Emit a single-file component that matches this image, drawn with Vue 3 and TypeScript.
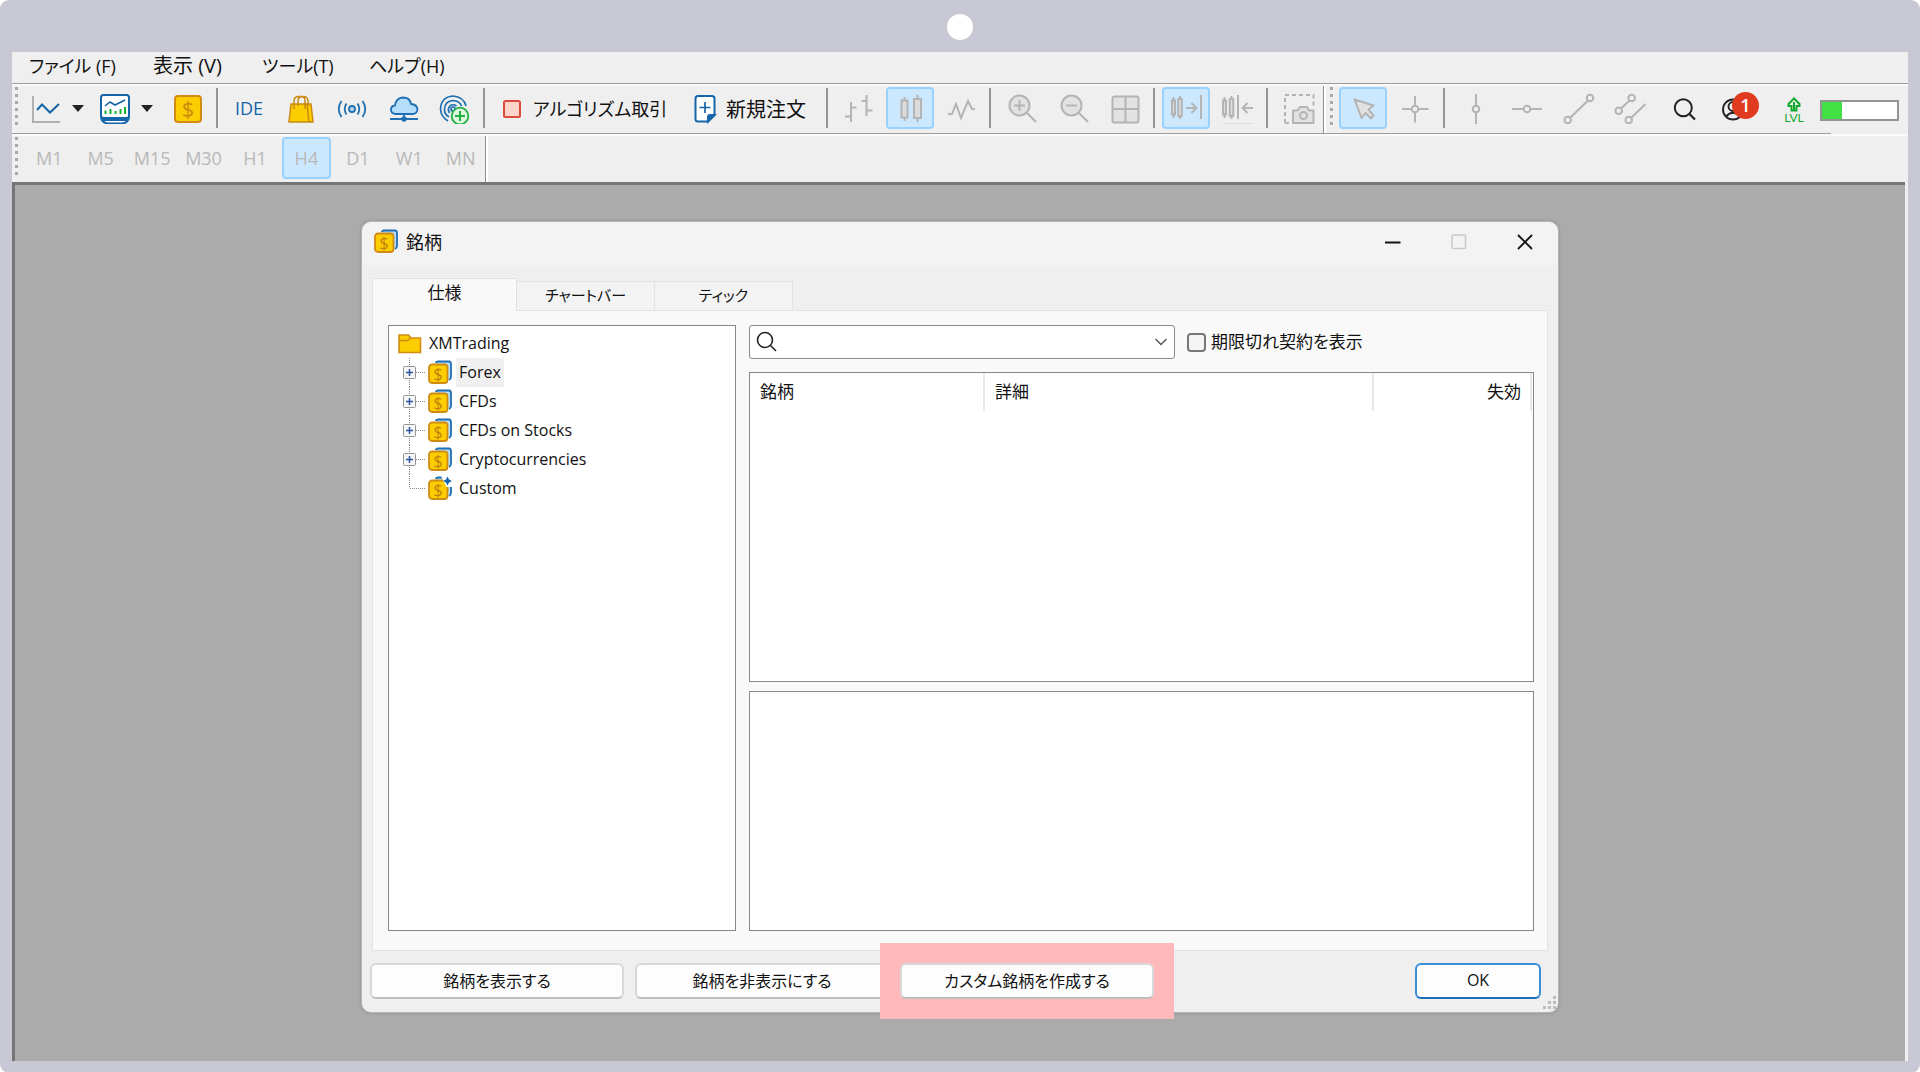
<script setup lang="ts">
import { ref } from 'vue'

interface Tool {
  id: string
  label: string
  active?: boolean
}

const menus = ['ファイル (F)', '表示 (V)', 'ツール(T)', 'ヘルプ(H)']

const icons: Record<string, string> = {
  line: '<g stroke-width="2"><path d="M3 4V30H30" stroke="#b0b0b0"/><path d="M7 18L12 12.5L20 20.5L29 12" stroke="#1565a8"/></g>',
  profile:
    '<g stroke="#1565a8" stroke-width="2"><path d="M2 25Q3 31 9 31.500H23Q29 31 30 25" fill="#fff"/><path d="M4 28H28"/><rect x="2" y="3" width="28" height="23" rx="2.500" fill="#fff"/><path d="M6 14L11 10L16 13L26 8" stroke-width="1.600"/></g><path d="M6.500 18.500V22M11.500 17V22M16.500 19V22M21.500 17V22M26 15V22" stroke="#12b32c" stroke-width="2"/>',
  gold: '<rect x="3" y="4" width="26" height="26" rx="3" fill="#fccd00" stroke="#d08c12" stroke-width="2"/><text x="16" y="24.500" text-anchor="middle" font-size="21" fill="#c98a12" stroke="none">$</text>',
  bag: '<path d="M6 12H26L28 30H4Z" fill="#fccd00" stroke="#c98a12" stroke-width="1.500"/><path d="M9 17V9Q9 5 13 4.500H17Q20 5 20 9V17M13 14V9Q13 5 17 4.500Q23 4 23 9V14M22 12L24 30" stroke="#c98a12" stroke-width="1.500"/>',
  signal:
    '<g stroke="#1f6fb2" stroke-width="1.800"><circle cx="16" cy="17" r="3" fill="#b9dcf6"/><path d="M10.500 11.500Q7 17 10.500 22.500M21.500 11.500Q25 17 21.500 22.500M5.500 9Q0 17 5.500 25M26.500 9Q32 17 26.500 25"/></g>',
  cloud:
    '<g stroke="#1f6fb2" stroke-width="1.800"><path d="M7.500 22Q3 21.500 3 17.500Q3 14 7 13.500Q8 6 15 5.500Q22 5.500 23 12Q29 12.500 29.500 17.500Q29 21.500 25 22Z" fill="#b5defb"/><path d="M16 22V27M2 27H30"/><circle cx="16" cy="27" r="1.800" fill="#1f6fb2"/></g>',
  radar:
    '<g stroke="#1f6fb2" stroke-width="1.700"><circle cx="14" cy="17" r="2"/><path d="M9 29Q2 25 1.500 17Q2 5 14 4Q25 5 27 14M10 25Q5 22 5.500 17Q6 9 14 8.500Q21 9 22.500 14M10.500 21Q8 17 11 14Q14 11.500 17.500 14"/></g><circle cx="21" cy="24" r="8.300" fill="#dff7df" stroke="#1fb141" stroke-width="1.800"/><path d="M21 19V29M16 24H26" stroke="#1fb141" stroke-width="2"/>',
  stop: '<rect x="8" y="9" width="16" height="16" rx="1.500" fill="#fdd3ca" stroke="#dc4a3c" stroke-width="2"/>',
  order:
    '<path d="M9 4H23Q25.500 4 25.500 6.500V23L19 29.500H9Q6.500 29.500 6.500 27V6.500Q6.500 4 9 4Z" fill="#fff" stroke="#1565a8" stroke-width="2"/><path d="M25.500 23H21Q19 23 19 25V29.500Z" fill="#1565a8" stroke="#1565a8"/><path d="M16 10V21M10.500 15.500H21.500" stroke="#1565a8" stroke-width="1.700"/>',
  bars: '<path d="M8 10V30M8 15.500H13.500M2 24.500H8M23.500 3V24M18.500 9H23.500M23.500 18.500H29.500"/>',
  candles:
    '<path d="M10.500 5V29M23.500 3V30"/><rect x="7.500" y="8.500" width="6" height="17" fill="#dcdcdc"/><rect x="20" y="7" width="7" height="19" fill="#dcdcdc"/>',
  lines: '<path d="M3 22H7L11 12L16 26L23 9L27 17H30"/>',
  zoomin: '<circle cx="13.500" cy="13.500" r="10" fill="#e2e2e2"/><path d="M21 21L30 30M13.500 8V19M8 13.500H19"/>',
  zoomout: '<circle cx="13.500" cy="13.500" r="10" fill="#e2e2e2"/><path d="M21 21L30 30M8 13.500H19"/>',
  tile: '<rect x="3.500" y="4.500" width="26" height="26" rx="2" fill="#e2e2e2"/><path d="M16.500 4.500V30M3.500 17H29.500"/>',
  scroll:
    '<path d="M3.500 5V26M10 4V27"/><rect x="2" y="8.500" width="3" height="14" fill="#ddd"/><rect x="8.200" y="7" width="3.600" height="17" fill="#ddd"/><path d="M16 16H26M21.500 11L26.500 16L21.500 21M31 3V27"/><path d="M1 31.500H31" stroke="#e4e8ec" stroke-width="1"/>',
  shift:
    '<path d="M2.500 5V26M9.500 4V27"/><rect x="1" y="8.500" width="3" height="14" fill="#ddd"/><rect x="7.700" y="7" width="3.600" height="17" fill="#ddd"/><path d="M16 3V27M31 16H21M25.500 11L20.500 16L25.500 21"/><path d="M1 31.500H31" stroke="#ddd" stroke-width="1"/>',
  camera:
    '<path d="M2 31V3H30.500V14M2 31H7" stroke-dasharray="4 3"/><path d="M10 18.500H14.500L17 15H24L26 18.500H30.500V31H10Z" fill="#e2e2e2" stroke-linejoin="round"/><circle cx="20.500" cy="23.500" r="3.500"/>',
  cursor:
    '<path d="M7.500 7.500L26.500 13.500L21.500 17.500L26.500 23.500L24 26.500L18.500 21L14.500 26Z" fill="#e2e2e2" stroke-linejoin="round"/>',
  cross: '<path d="M16 4V13.500M16 20.500V30.500M3 17H12.500M19.500 17H29.500"/><circle cx="16" cy="17" r="3.300"/>',
  vline: '<path d="M16 2V13.500M16 20.500V32"/><circle cx="16" cy="17" r="3.300"/>',
  hline: '<path d="M1 17H12.500M19.500 17H31"/><circle cx="16" cy="17" r="3.300"/>',
  trend: '<path d="M7 26L25 8.500"/><circle cx="4.700" cy="28" r="3.300"/><circle cx="27" cy="6" r="3.300"/>',
  channel:
    '<path d="M7 16.500L15.500 8.500M17 26L31.500 12"/><circle cx="4.700" cy="18.700" r="3.300"/><circle cx="17.700" cy="6" r="3.300"/><circle cx="14.700" cy="28" r="3.300"/>',
  search: '<circle cx="14.300" cy="15.800" r="8.500" stroke="#222"/><path d="M20.500 22L26 27.500" stroke="#222" stroke-width="2.200"/>',
  user: '<g stroke="#222" stroke-width="1.900"><circle cx="12" cy="17.500" r="10"/><circle cx="12" cy="14.500" r="4.500"/><path d="M5 24.500Q12 17 19 24.500"/></g>',
  coins:
    '<path d="M9 3Q9 1.500 11 1.500H22Q24 1.500 24 4.500V17Q24 19 22 20" fill="#b5defb" stroke="#1f6fb2" stroke-width="1.800"/><rect x="2" y="4.500" width="18.500" height="18.500" rx="3" fill="#fccd00" stroke="#d08c12" stroke-width="1.800"/><text x="11.200" y="19.500" text-anchor="middle" font-size="16" fill="#c07f10" stroke="none">$</text>',
  folder:
    '<path d="M2 4H11.500L14 7H23.500V21.500H2Z" fill="#fccd00" stroke="#d08c12" stroke-width="1.600"/><path d="M2 9.500H10.500L13.500 7" stroke="#d08c12" stroke-width="1.600"/>',
}

const services: Tool[] = [
  { id: 'bag', label: 'Market' },
  { id: 'signal', label: 'Signals' },
  { id: 'cloud', label: 'VPS' },
  { id: 'radar', label: 'Hosting' },
]

const groups: { name: string; tools: Tool[] }[] = [
  {
    name: 'w150',
    tools: [
      { id: 'bars', label: 'Bars' },
      { id: 'candles', label: 'Candles', active: true },
      { id: 'lines', label: 'Line' },
    ],
  },
  {
    name: 'w151',
    tools: [
      { id: 'zoomin', label: 'Zoom in' },
      { id: 'zoomout', label: 'Zoom out' },
      { id: 'tile', label: 'Tile windows' },
    ],
  },
  {
    name: 'w100',
    tools: [
      { id: 'scroll', label: 'Auto scroll', active: true },
      { id: 'shift', label: 'Chart shift' },
    ],
  },
]

const pointers: Tool[] = [
  { id: 'cursor', label: 'Cursor', active: true },
  { id: 'cross', label: 'Crosshair' },
]

const drawing: Tool[] = [
  { id: 'vline', label: 'Vertical line' },
  { id: 'hline', label: 'Horizontal line' },
  { id: 'trend', label: 'Trend line' },
  { id: 'channel', label: 'Channel' },
]

const frames = ['M1', 'M5', 'M15', 'M30', 'H1', 'H4', 'D1', 'W1', 'MN']
const frame = ref('H4')

const tabs = ['仕様', 'チャートバー', 'ティック']
const tab = ref('仕様')

const nodes = ['Forex', 'CFDs', 'CFDs on Stocks', 'Cryptocurrencies', 'Custom']
const selected = ref('Forex')
const query = ref('')
const expired = ref(false)
</script>

<template>
  <div class="frame">
    <div class="lens"></div>
    <main class="app">
      <nav class="menubar">
        <button v-for="m in menus" :key="m">{{ m }}</button>
      </nav>

      <div class="toolbar">
        <i class="grip"></i>
        <div class="group w190">
          <div class="charts">
            <button v-for="id in ['line', 'profile']" :key="id" class="split" :aria-label="id">
              <svg class="ico" viewBox="0 0 32 32" v-html="icons[id]"></svg>
              <svg class="caret" viewBox="0 0 12 7"><path d="M0 0H12L6 7Z" fill="#222" /></svg>
            </button>
          </div>
          <button class="tool" aria-label="Symbols"><svg class="ico" viewBox="0 0 32 32" v-html="icons.gold"></svg></button>
        </div>
        <i class="sep"></i>
        <div class="group w254">
          <button class="tool ide">IDE</button>
          <button v-for="t in services" :key="t.id" class="tool" :aria-label="t.label">
            <svg class="ico" viewBox="0 0 32 32" v-html="icons[t.id]"></svg>
          </button>
        </div>
        <i class="sep"></i>
        <div class="group w330">
          <button class="tool wide"><svg class="ico" viewBox="0 0 32 32" v-html="icons.stop"></svg>アルゴリズム取引</button>
          <button class="tool wide"><svg class="ico" viewBox="0 0 32 32" v-html="icons.order"></svg>新規注文</button>
        </div>
        <i class="sep"></i>
        <template v-for="g in groups" :key="g.name">
          <div class="group" :class="g.name">
            <button v-for="t in g.tools" :key="t.id" class="tool" :class="{ active: t.active }" :aria-label="t.label">
              <svg class="ico" viewBox="0 0 32 32" v-html="icons[t.id]"></svg>
            </button>
          </div>
          <i class="sep"></i>
        </template>
        <button class="tool" aria-label="Screenshot"><svg class="ico" viewBox="0 0 32 32" v-html="icons.camera"></svg></button>
        <i class="edge"></i>
        <i class="grip"></i>
        <div class="group w100">
          <button v-for="t in pointers" :key="t.id" class="tool" :class="{ active: t.active }" :aria-label="t.label">
            <svg class="ico" viewBox="0 0 32 32" v-html="icons[t.id]"></svg>
          </button>
        </div>
        <i class="sep"></i>
        <div class="group w202">
          <button v-for="t in drawing" :key="t.id" class="tool" :aria-label="t.label">
            <svg class="ico" viewBox="0 0 32 32" v-html="icons[t.id]"></svg>
          </button>
        </div>
        <div class="group status">
          <button class="tool" aria-label="Search"><svg class="ico" viewBox="0 0 32 32" v-html="icons.search"></svg></button>
          <button class="tool user" aria-label="Account">
            <svg class="ico" viewBox="0 0 32 32" v-html="icons.user"></svg>
            <span class="badge">1</span>
          </button>
          <div class="level">
            <svg viewBox="0 0 14 15"><path d="M7 1.500L12.500 7V9H9.500V13.500H4.500V9H1.500V7ZM7 5V13" /></svg>
            <span>LVL</span>
          </div>
          <progress class="meter" max="100" value="26" aria-label="LVL"></progress>
        </div>
      </div>

      <div class="timebar">
        <i class="grip"></i>
        <div class="frames">
          <button v-for="f in frames" :key="f" :class="{ active: f === frame }" @click="frame = f">{{ f }}</button>
        </div>
        <i class="edge"></i>
      </div>

      <div class="workspace">
        <section class="dialog" role="dialog" aria-label="銘柄">
          <header class="title">
            <svg class="coin" viewBox="0 0 26 26" v-html="icons.coins"></svg>
            <h1>銘柄</h1>
            <button aria-label="Minimize"><svg viewBox="0 0 16 16"><path d="M0 8.500H15.500" stroke="#111" stroke-width="2" /></svg></button>
            <button aria-label="Maximize" disabled>
              <svg viewBox="0 0 16 16"><rect x="1" y="1" width="13.500" height="13.500" rx="1" stroke="#c9c9c9" stroke-width="1.500" /></svg>
            </button>
            <button aria-label="Close"><svg viewBox="0 0 16 16"><path d="M1 1L15 15M15 1L1 15" stroke="#111" stroke-width="1.800" /></svg></button>
          </header>

          <div class="tabs" role="tablist">
            <button v-for="t in tabs" :key="t" role="tab" :aria-selected="t === tab" :class="{ on: t === tab }" @click="tab = t">
              {{ t }}
            </button>
          </div>

          <div class="panel">
            <ul class="tree">
              <li class="root"><svg class="coin" viewBox="0 0 26 26" v-html="icons.folder"></svg><span>XMTrading</span></li>
              <li v-for="(n, i) in nodes" :key="n" :class="{ picked: n === selected }" @click="selected = n">
                <svg class="branch" viewBox="0 0 24 29">
                  <path :d="i < 4 ? 'M7.500 0V29' : 'M7.500 0V14'" stroke="#888" stroke-dasharray="1 1" />
                  <path d="M8 14.500H24" stroke="#888" stroke-dasharray="1 1" />
                  <template v-if="i < 4">
                    <rect x="1.500" y="8.500" width="12" height="12" rx="1" fill="#f6f6f6" stroke="#949494" />
                    <path d="M4 14.500H11M7.500 11V18" stroke="#2f55a5" stroke-width="1.500" />
                  </template>
                </svg>
                <svg class="coin" viewBox="0 0 26 26">
                  <g v-html="icons.coins"></g>
                  <path v-if="i === 4" d="M14 0H26V11H19.500Z" fill="#fff" />
                  <path v-if="i === 4" d="M20.500 0.500L22 3.500L25 5L22 6.500L20.500 9.500L19 6.500L16 5L19 3.500Z" fill="#1565a8" />
                </svg>
                <span>{{ n }}</span>
              </li>
            </ul>

            <div class="detail">
              <div class="filter">
                <div class="combo">
                  <svg class="lens-icon" viewBox="0 0 22 22"><circle cx="9" cy="9" r="7.500" /><path d="M14.500 14.500L20 20" /></svg>
                  <input v-model="query" type="text" aria-label="Search" />
                  <button aria-label="Open list"><svg viewBox="0 0 12 8"><path d="M0.500 1L6 6.500L11.500 1" /></svg></button>
                </div>
                <label class="check"><input v-model="expired" type="checkbox" />期限切れ契約を表示</label>
              </div>
              <div class="list">
                <table>
                  <thead>
                    <tr>
                      <th class="c1">銘柄</th>
                      <th>詳細</th>
                      <th class="c3">失効</th>
                    </tr>
                  </thead>
                </table>
              </div>
              <div class="info"></div>
            </div>
          </div>

          <footer class="actions">
            <button>銘柄を表示する</button>
            <button>銘柄を非表示にする</button>
            <div class="focus"><button>カスタム銘柄を作成する</button></div>
            <button class="ok">OK</button>
            <svg class="resize" viewBox="0 0 14 14">
              <path d="M10 0h3v3h-3zM10 5h3v3h-3zM5 5h3v3h-3zM10 10h3v3h-3zM5 10h3v3h-3zM0 10h3v3h-3z" fill="#bdbdbd" />
            </svg>
          </footer>
        </section>
      </div>
    </main>
  </div>
</template>

<style>
body {
  margin: 0;
  background: #fff;
}
</style>

<style scoped>
* {
  box-sizing: border-box;
}
.frame {
  min-height: 100vh;
  padding: 14px 12px 12px;
  display: flex;
  flex-direction: column;
  background: #c8c7d4;
  border-radius: 9px;
  font-family: 'Open Sans', 'Noto Sans CJK JP', sans-serif;
  font-feature-settings: 'palt';
  color: #111;
}
button {
  margin: 0;
  padding: 0;
  border: 0;
  background: none;
  font: inherit;
  color: inherit;
  white-space: nowrap;
}
svg {
  display: block;
  flex: none;
  fill: none;
}
.lens {
  width: 26px;
  height: 26px;
  margin: 0 auto 12px;
  border-radius: 50%;
  background: #fff;
}
.app {
  flex: 1;
  display: flex;
  flex-direction: column;
  background: #efefef;
}
.menubar {
  height: 32px;
  padding: 0 0 3px 17px;
  display: flex;
  border-bottom: 1px solid #9d9d9d;
  font-size: 18px;
  line-height: 28px;
}
.menubar button {
  text-align: left;
}
.menubar button:nth-child(1) {
  width: 124px;
}
.menubar button:nth-child(2) {
  width: 109px;
  font-size: 20px;
}
.menubar button:nth-child(3) {
  width: 107px;
}
.toolbar,
.timebar {
  position: relative;
  height: 50px;
  padding-bottom: 4px;
  border-top: 2px solid #fafafa;
  display: flex;
  align-items: center;
}
.toolbar::after {
  content: '';
  position: absolute;
  left: 0;
  right: 77px;
  bottom: 0;
  height: 1px;
  background: #9d9d9d;
}
.timebar {
  height: 48px;
  padding-bottom: 2px;
}
.grip {
  flex: none;
  width: 3px;
  height: 42px;
  margin: 0 4px 0 3px;
  background: repeating-linear-gradient(#a8a8a8 0 3px, transparent 3px 7px);
}
.group {
  flex: none;
  display: flex;
  justify-content: space-between;
  align-items: center;
}
.charts {
  display: flex;
  gap: 2px;
}
.w190 {
  width: 190px;
}
.w254 {
  width: 254px;
}
.w330 {
  width: 330px;
}
.w150 {
  width: 150px;
}
.w151 {
  width: 151px;
}
.w100 {
  width: 100px;
}
.w202 {
  width: 202px;
}
.sep {
  flex: none;
  width: 2px;
  height: 40px;
  margin: 0 7px 0 4px;
  background: #949494;
}
.edge {
  flex: none;
  align-self: stretch;
  width: 3px;
  margin-bottom: -2px;
  border-left: 1px solid #8f8f8f;
  background: #fff;
}
.toolbar .edge {
  margin: 0 1px -4px 0;
}
.toolbar .edge + .grip {
  margin-right: 6px;
}
.tool {
  flex: none;
  width: 48px;
  height: 42px;
  display: flex;
  align-items: center;
  justify-content: center;
  border: 2px solid transparent;
  border-radius: 4px;
}
.active {
  background: #cce8ff;
  border-color: #99d1ff;
}
.ico {
  width: 32px;
  height: 32px;
  stroke: #b4b4b4;
  stroke-width: 2;
}
.split {
  width: 67px;
  height: 42px;
  padding-left: 8px;
  display: flex;
  align-items: center;
  gap: 10px;
}
.caret {
  width: 12px;
  height: 7px;
}
.ide {
  font-size: 18px;
  color: #1565a8;
}
.wide {
  width: auto;
  padding: 0 4px 0 2px;
  gap: 5px;
  font-size: 18px;
}
.wide + .wide {
  font-size: 20px;
  padding-right: 14px;
}
.status {
  padding-left: 7px;
}
.user {
  position: relative;
  width: 52px;
  padding-left: 4px;
}
.badge {
  position: absolute;
  left: 21px;
  top: 3px;
  width: 27px;
  height: 27px;
  border-radius: 50%;
  background: #e03a20;
  color: #fff;
  font: 600 18px/27px 'Open Sans', sans-serif;
}
.level {
  width: 57px;
  margin-top: 4px;
  padding-left: 9px;
  display: flex;
  flex-direction: column;
  align-items: center;
  color: #12a82c;
  font: 12px/12px Lato, sans-serif;
}
.level svg {
  width: 14px;
  height: 15px;
  stroke: #12a82c;
  stroke-width: 2;
}
.meter {
  appearance: none;
  width: 79px;
  height: 21px;
  margin: 4px 0 0 2px;
  border: 2px solid #939393;
  background: #fff;
}
.meter::-webkit-progress-bar {
  background: #fff;
}
.meter::-webkit-progress-value {
  background: #43e043;
}
.frames {
  width: 460px;
  margin-left: 3px;
  display: flex;
  gap: 3px;
  color: #b8b8b8;
  font-size: 18px;
}
.frames button {
  flex: 1;
  height: 42px;
  border: 2px solid transparent;
  border-radius: 4px;
}
.frames .active {
  border-color: #99d1ff;
}
.workspace {
  flex: 1;
  margin-right: 3px;
  padding: 36px 0 48px;
  border-top: 3px solid #757575;
  border-left: 3px solid #757575;
  background: #ababab;
}
.dialog {
  width: 1198px;
  max-width: 100%;
  margin: 0 auto;
  border: 1px solid #b5b5b5;
  border-radius: 10px;
  background: #efefef;
  box-shadow: 0 0 3px #8a8a8a;
  font-size: 17px;
}
.title {
  height: 43px;
  padding: 0 17px 3px 11px;
  display: flex;
  align-items: center;
  background: #f3f3f3;
  border-radius: 10px 10px 0 0;
}
.title h1 {
  flex: 1;
  margin: 0 0 0 7px;
  font-size: 18px;
  line-height: 26px;
  font-weight: 400;
}
.title button {
  width: 32px;
  height: 32px;
  margin-left: 34px;
  display: flex;
  align-items: center;
  justify-content: center;
}
.title svg:not(.coin) {
  width: 16px;
  height: 16px;
}
.coin {
  width: 26px;
  height: 26px;
}
.tabs {
  height: 45px;
  padding: 0 10px;
  display: flex;
  align-items: flex-end;
}
.tabs button {
  width: 138px;
  height: 29px;
  padding-bottom: 4px;
  border: 1px solid #e2e2e2;
  border-left: 0;
  border-bottom: 0;
  background: #f3f3f3;
  font-size: 15px;
}
.tabs .on {
  position: relative;
  width: 145px;
  height: 33px;
  margin-bottom: -1px;
  padding-bottom: 8px;
  border-left: 1px solid #e2e2e2;
  background: #f9f9f9;
  font-size: 17px;
}
.panel {
  margin: 0 10px;
  padding: 14px 13px 19px 15px;
  display: flex;
  gap: 13px;
  border: 1px solid #e2e2e2;
  background: #f9f9f9;
}
.tree {
  width: 348px;
  margin: 0;
  padding: 3px 0 0 8px;
  list-style: none;
  background: #fff;
  border: 1px solid #828790;
  font-size: 16px;
}
.tree li {
  height: 29px;
  padding-left: 5px;
  display: flex;
  align-items: center;
}
.tree .root {
  padding-left: 0;
}
.tree span {
  padding: 0 3px;
  margin-left: 3px;
  line-height: 29px;
}
.picked span {
  background: #f0f0f0;
}
.branch {
  width: 24px;
  height: 29px;
  margin-right: 1px;
}
.detail {
  flex: 1;
  display: flex;
  flex-direction: column;
}
.filter {
  display: flex;
  align-items: center;
  margin-bottom: 13px;
}
.combo {
  width: 426px;
  height: 34px;
  padding: 0 7px 0 6px;
  display: flex;
  align-items: center;
  background: #fff;
  border: 1px solid #8a8a8a;
  border-radius: 3px;
}
.lens-icon {
  width: 22px;
  height: 22px;
  stroke: #222;
  stroke-width: 1.6;
}
.combo input {
  flex: 1;
  min-width: 0;
  border: 0;
  outline: 0;
  background: none;
  font: inherit;
}
.combo button svg {
  width: 12px;
  height: 8px;
  stroke: #555;
  stroke-width: 1.4;
}
.check {
  margin-left: 12px;
  display: flex;
  align-items: center;
  gap: 5px;
  line-height: 24px;
}
.check input {
  appearance: none;
  width: 19px;
  height: 19px;
  margin: 0;
  border: 2px solid #777;
  border-radius: 4px;
  background: #f5f5f5;
}
.list {
  height: 310px;
  margin-bottom: 9px;
  border: 1px solid #828790;
  background: #fff;
}
.list table {
  width: calc(100% - 1px);
  border-collapse: collapse;
  table-layout: fixed;
}
.list th {
  height: 38px;
  padding: 0 9px 3px 10px;
  border-right: 2px solid #e8e8e8;
  font-weight: 400;
  text-align: left;
}
.list .c1 {
  width: 234px;
}
.list .c3 {
  width: 158px;
  text-align: right;
}
.info {
  height: 240px;
  border: 1px solid #828790;
  background: #fff;
}
.actions {
  position: relative;
  padding: 12px 17px 13px 8px;
  display: flex;
  gap: 11px;
  font-size: 16px;
}
.actions button {
  width: 254px;
  height: 36px;
  padding-bottom: 2px;
  background: #fdfdfd;
  border: 2px solid #d8d8d8;
  border-bottom-color: #c0c0c0;
  border-radius: 6px;
}
.focus {
  position: relative;
  isolation: isolate;
}
.focus::before {
  content: '';
  position: absolute;
  inset: -20px;
  z-index: -1;
  background: #ffb9ba;
}
.actions .ok {
  width: 126px;
  margin-left: auto;
  border-color: #3c8ed8;
  border-bottom-color: #1d6fb5;
}
.resize {
  position: absolute;
  right: 1px;
  bottom: 2px;
  width: 14px;
  height: 14px;
}
</style>
